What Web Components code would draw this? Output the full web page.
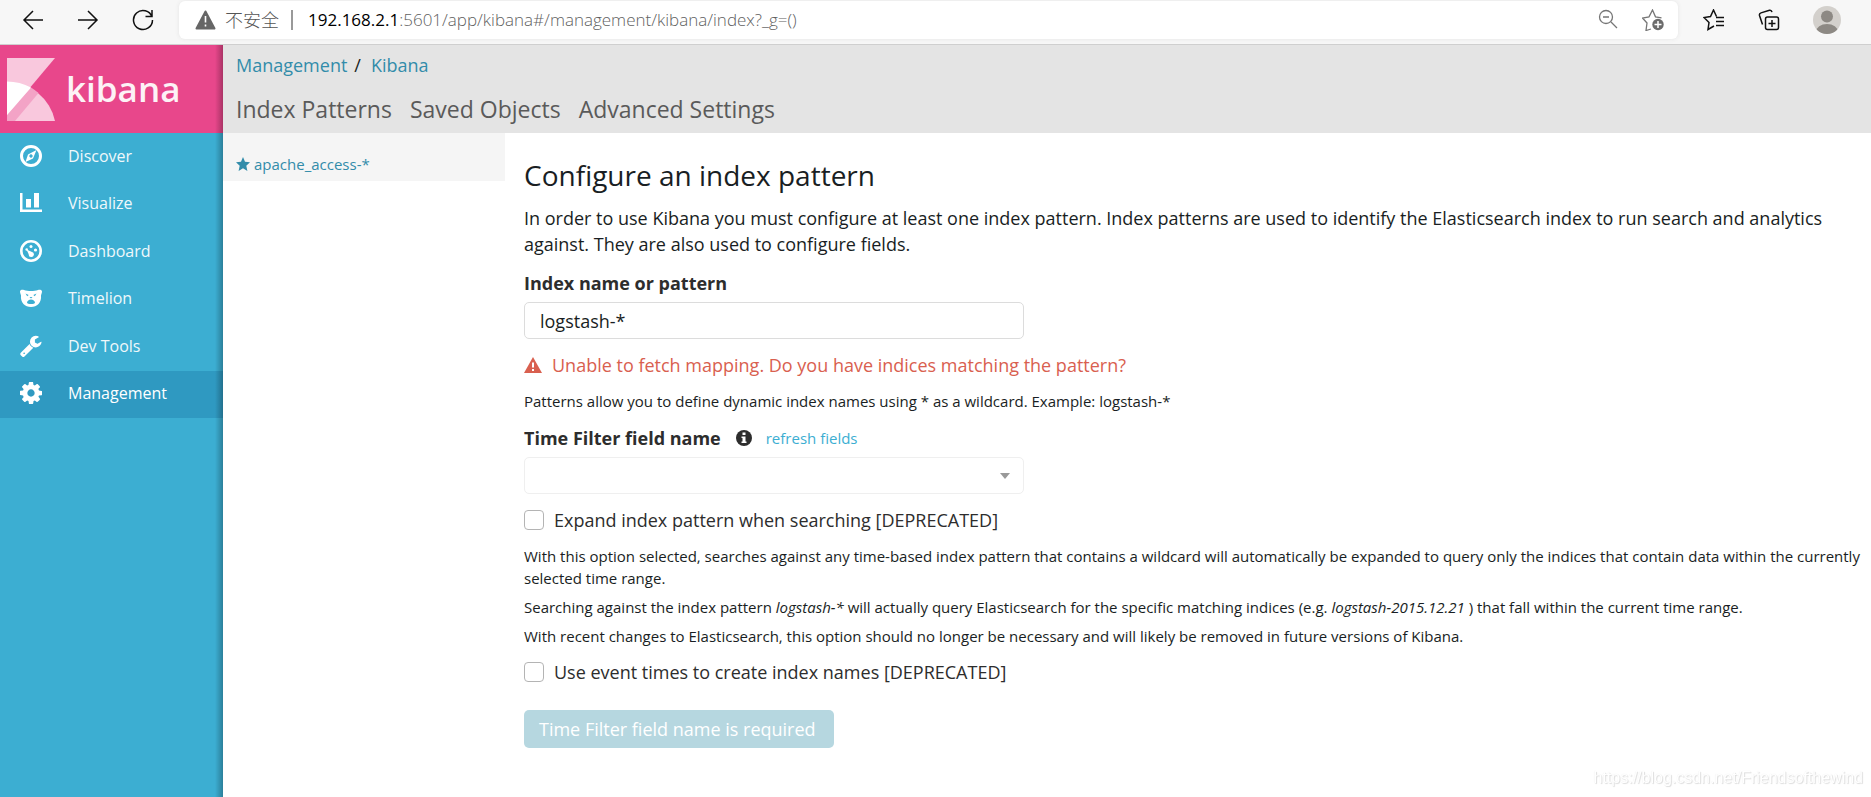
<!DOCTYPE html>
<html lang="en">
<head>
<meta charset="utf-8">
<title>Kibana</title>
<style>
  html, body { margin: 0; min-height: 100vh; }
  body {
    display: flex; flex-direction: column; background: #fff; color: #191e23;
    font: 18px/26px "Open Sans", "Noto Sans CJK SC", sans-serif;
    --accent: #328caa; --link: #3caed2; --ink: #2d2d2d;
  }
  kibana-app { flex: 1; }
</style>
</head>
<body>
<browser-bar></browser-bar>
<kibana-app>
  <side-nav slot="nav">
    <nav-item icon="compass">Discover</nav-item>
    <nav-item icon="chart">Visualize</nav-item>
    <nav-item icon="gauge">Dashboard</nav-item>
    <nav-item icon="bear">Timelion</nav-item>
    <nav-item icon="wrench">Dev Tools</nav-item>
    <nav-item icon="cog" active>Management</nav-item>
  </side-nav>
  <management-header slot="header"></management-header>
  <pattern-list slot="list">apache_access-*</pattern-list>
  <pattern-form slot="main"></pattern-form>
</kibana-app>
<water-mark>https://blog.csdn.net/Friendsofthewind</water-mark>

<script>
const define = (name, html, setup) => {
  const tpl = document.createElement('template');
  tpl.innerHTML = html;
  customElements.define(name, class extends HTMLElement {
    constructor() {
      super();
      this.attachShadow({ mode: 'open' }).append(tpl.content.cloneNode(true));
    }
    connectedCallback() { if (setup) setup(this, this.shadowRoot); }
  });
};

const ICONS = {
  compass: '<svg viewBox="0 0 22 22"><circle cx="11" cy="11" r="9.500" fill="none" stroke="#fff" stroke-width="3"/><path fill="#fff" fill-rule="evenodd" d="M16.500 5 13 13.500 5.500 17 8 9.500ZM11 9.300a1.700 1.700 0 1 0 .01 0Z"/></svg>',
  chart: '<svg viewBox="0 0 22 22"><path fill="#fff" d="M0 1h2.500v16.500H22V20H0zM6 7h5v8.500H6zM14 1h5v14.500h-5z"/></svg>',
  gauge: '<svg viewBox="0 0 22 22"><circle cx="11" cy="11" r="9.700" fill="none" stroke="#fff" stroke-width="2.600"/><g fill="#fff"><circle cx="11" cy="6.500" r="1.500"/><circle cx="15.500" cy="10" r="1.600"/><circle cx="6.700" cy="9.500" r="1.300"/><path d="M6.500 9.500 12 12a2.600 2.600 0 1 1-3.300 2.300Z"/></g></svg>',
  bear: '<svg viewBox="0 0 22 22"><path fill="#fff" fill-rule="evenodd" d="M0 4.500C0 3 2 2.500 4 3c4 1.300 10 1.300 14 0 2-.5 4 0 4 1.500 0 1.500-.7 2.500-1 4 .8 7-4 11.500-10 11.500S.2 15.500 1 8.500c-.3-1.500-1-2.500-1-4ZM5.500 6.500l1.700 2.700 1.500-1.200ZM16.500 6.500l-1.700 2.700L13.300 8ZM9.500 10l1.500 1.500 1.500-1.500ZM11 12.500c-2 0-4 1.800-4 3 0 1 2 1.500 4 1.500s4-.5 4-1.500c0-1.200-2-3-4-3Z"/></svg>',
  wrench: '<svg viewBox="64 64 1700 1700"><path fill="#fff" d="M448 1472q0-26-19-45t-45-19-45 19-19 45 19 45 45 19 45-19 19-45zm644-420l-682 682q-37 37-90 37-52 0-91-37l-106-108q-38-36-38-90 0-53 38-91l681-681q39 98 114.500 173.500t173.500 114.500zm634-435q0 39-23 106-47 134-164.500 217.500t-258.500 83.500q-185 0-316.500-131.500t-131.500-316.500 131.500-316.500 316.500-131.500q58 0 121.500 16.500t107.500 46.500q16 11 16 28t-16 28l-293 169v224l193 107q5-3 79-48.500t135.500-81 70.500-35.500q15 0 23.500 10t8.500 25z"/></svg>',
  cog: '<svg viewBox="128 128 1536 1536"><path fill="#fff" d="M1152 896q0-106-75-181t-181-75-181 75-75 181 75 181 181 75 181-75 75-181zm512-109v222q0 12-8 23t-20 13l-185 28q-19 54-39 91 35 50 107 138 10 12 10 25t-9 23q-27 37-99 108t-94 71q-12 0-26-9l-138-108q-44 23-91 38-16 136-29 186-7 28-36 28h-222q-14 0-24.500-8.500t-11.500-21.500l-28-184q-49-16-90-37l-141 107q-10 9-25 9-14 0-25-11-126-114-165-168-7-10-7-23 0-12 8-23 15-21 51-66.500t54-70.500q-27-50-41-99l-183-27q-13-2-21-12.500t-8-23.500v-222q0-12 8-23t19-13l186-28q14-46 39-92-40-57-107-138-10-12-10-24 0-10 9-23 26-36 98.500-107.500t94.500-71.500q13 0 26 10l138 107q44-23 91-38 16-136 29-186 7-28 36-28h222q14 0 24.500 8.500t11.500 21.500l28 184q49 16 90 37l142-107q9-9 24-9 13 0 25 10 129 119 165 170 7 8 7 22 0 12-8 23-15 21-51 66.500t-54 70.500q26 50 41 98l183 28q13 2 21 12.500t8 23.500z"/></svg>'
};

define('browser-bar', `
  <style>
    :host { display: flex; align-items: center; height: 44px; background: #f7f7f7; border-bottom: 1px solid #cfcfcf; padding: 0 30px 0 22px; gap: 33px; font-size: 17px; line-height: 24px; box-sizing: content-box; }
    button { all: unset; display: flex; flex: none; }
    svg { display: block; }
    .arrows { display: flex; gap: 33px; padding-bottom: 4px; }
    .field { flex: 1; min-width: 0; box-sizing: border-box; display: flex; align-items: center; height: 38px; margin: 0 0 4px -8px; padding: 0 13px 0 16px; border-radius: 6px; background: #fff; box-shadow: 0 0 4px #e4e4e4; color: #6b6b6b; }
    .warn { margin-right: 9px; }
    .cjk { font-size: 18px; font-weight: 300; color: #555; }
    .sep { width: 2px; height: 20px; background: #999; margin: 0 15px 0 12px; }
    .url { flex: 1; min-width: 0; white-space: nowrap; overflow: hidden; color: #5f5f5f; font-weight: 300; }
    .url b { color: #000; font-weight: 400; }
    .inside { display: flex; gap: 24px; }
    .tools { display: flex; align-items: center; gap: 33px; margin-left: -8px; padding-bottom: 4px; }
  </style>
  <div class="arrows">
    <button aria-label="Back"><svg width="22" height="22" fill="none" stroke="#111" stroke-width="1.500"><path d="M21 11H2M11 2 2 11l9 9"/></svg></button>
    <button aria-label="Forward"><svg width="22" height="22" fill="none" stroke="#111" stroke-width="1.500"><path d="M1 11h19M11 2l9 9-9 9"/></svg></button>
    <button aria-label="Reload"><svg width="22" height="22" fill="none" stroke="#111" stroke-width="1.500"><path d="M20 8a9.500 9.500 0 1 0 .5 3M20 1v6.500h-6.500"/></svg></button>
  </div>
  <div class="field">
    <svg class="warn" width="21" height="20" viewBox="0 0 21 20"><path d="M10.500 1.500 19.500 18.500h-18Z" fill="#666" stroke="#666" stroke-width="2" stroke-linejoin="round"/><path d="M10.500 6v6.500M10.500 14.500v2" stroke="#fff" stroke-width="1.600"/></svg>
    <span class="cjk">不安全</span><span class="sep"></span>
    <span class="url"><b>192.168.2.1</b>:5601/app/kibana#/management/kibana/index?_g=()</span>
    <div class="inside">
      <button aria-label="Zoom out"><svg width="20" height="20" fill="none" stroke="#767676" stroke-width="1.300"><circle cx="8" cy="8" r="6.500"/><path d="M5 8h6M13 13l6 6"/></svg></button>
      <button aria-label="Add favourite"><svg width="23" height="22" fill="none" stroke="#767676" stroke-width="1.300"><path d="M9 20l-5 1.500 1-7.500-4.500-5L7 7.800 10.500 1l3 6.800 6 1"/><circle cx="16" cy="15.500" r="5.700" fill="#6b6b6b" stroke="none"/><path stroke="#fff" stroke-width="1.500" d="M16 12v7M12.500 15.500h7"/></svg></button>
    </div>
  </div>
  <div class="tools">
    <button aria-label="Favourites"><svg width="22" height="22" fill="none" stroke="#111" stroke-width="1.500"><path d="M11 17l-6 3.500 1-7L1 8.500l6.500-1L10.500 1l3 6.500M13 8.500h8M13 12.500h8M13 16.500h8"/></svg></button>
    <button aria-label="Collections"><svg width="22" height="22" fill="none" stroke="#111" stroke-width="1.500"><rect x="7.500" y="8" width="13" height="12.500" rx="2"/><path d="M14 11v7M10.500 14.500h7M4.500 15.500 1.500 6.500q-.5-2 1.500-2.600L11.500 1.200q2-.4 2.500 2"/></svg></button>
    <button aria-label="Profile"><svg width="28" height="28" viewBox="0 0 28 28"><defs><clipPath id="c"><circle cx="14" cy="14" r="14"/></clipPath></defs><g clip-path="url(#c)"><path fill="#d3d0cc" d="M0 0h28v28H0z"/><g fill="#8d8984"><circle cx="14" cy="10.500" r="6"/><ellipse cx="14" cy="26" rx="11" ry="8"/></g></g></svg></button>
  </div>`);

define('kibana-app', `
  <style>
    :host { display: grid; grid-template-columns: 223px minmax(0, 1fr); }
    .page { display: grid; grid-template-columns: 282px minmax(0, 1fr); grid-template-rows: auto 1fr; }
    slot[name=header]::slotted(*) { grid-column: 1 / -1; }
  </style>
  <slot name="nav"></slot>
  <div class="page"><slot name="header"></slot><slot name="list"></slot><slot name="main"></slot></div>`);

define('side-nav', `
  <style>
    :host { display: block; position: relative; background: #3caed2; }
    :host::after { content: ""; position: absolute; inset: 0 0 0 auto; width: 8px; background: linear-gradient(to right, #0000, #0004); pointer-events: none; }
    .brand { display: flex; align-items: center; gap: 11px; height: 88px; padding-left: 7px; background: #e8478b; color: #fff; text-decoration: none; }
    .brand span { font-size: 35px; line-height: 40px; font-weight: 600; opacity: .93; }
    nav { display: grid; grid-auto-rows: 1fr; height: 285px; }
  </style>
  <a class="brand" href="#">
    <svg width="48" height="63" viewBox="0 0 48 63" aria-hidden="true"><path fill="#f9c8dd" d="M0 0h48L0 57Z"/><path fill="#f9c8dd" d="M0 24a49 49 0 0 1 48 39H0Z"/><path fill="#f3a3c6" d="M24 29.500Q28 32 31.500 35L8 63H0v-6Z"/><path fill="#fff" d="M0 23.500q13 0 24 6L0 57Z"/></svg>
    <span>kibana</span>
  </a>
  <nav><slot></slot></nav>`);

define('nav-item', `
  <style>
    :host { display: block; }
    a { box-sizing: border-box; display: flex; align-items: center; gap: 26px; height: 100%; padding: 0 0 2px 20px; color: #eff8fb; font-size: 16px; line-height: 24px; text-decoration: none; }
    :host([active]) a { background: #2f99c1; color: #fff; }
    .icon, .icon svg { display: block; width: 22px; height: 22px; }
  </style>
  <a href="#"><span class="icon"></span><slot></slot></a>`,
  (host, root) => { root.querySelector('.icon').innerHTML = ICONS[host.getAttribute('icon')]; });

define('management-header', `
  <style>
    :host { display: block; background: #e4e4e4; padding: 7px 13px 8px; }
    .crumbs { display: flex; gap: 7px; line-height: 26px; }
    .crumbs a { color: var(--accent); text-decoration: none; }
    .crumbs a + span { margin-right: 3px; }
    nav { display: flex; gap: 18px; margin-top: 16px; font-size: 23px; line-height: 31px; }
    nav a { color: #5a5a5a; text-decoration: none; }
  </style>
  <div class="crumbs"><a href="#">Management</a><span>/</span><a href="#">Kibana</a></div>
  <nav><a href="#">Index Patterns</a><a href="#">Saved Objects</a><a href="#">Advanced Settings</a></nav>`);

define('pattern-list', `
  <style>
    :host { display: block; }
    a { display: flex; align-items: center; gap: 4px; height: 34px; padding: 14px 13px 0; background: #f5f5f5; color: var(--accent); font-size: 15px; line-height: 22px; text-decoration: none; }
  </style>
  <a href="#"><svg width="14" height="14" viewBox="0 0 14 14" fill="currentColor" aria-hidden="true"><path d="M7 0 9 4.800 14 5.300 10.300 8.700 11.400 14 7 11.300 2.600 14 3.700 8.700 0 5.300 5 4.800Z"/></svg><slot></slot></a>`);

define('check-field', `
  <style>
    :host { display: block; }
    label { display: flex; align-items: center; gap: 10px; color: var(--ink); }
    input { appearance: none; flex: none; width: 20px; height: 20px; margin: 0; border: 1px solid #b4b4b4; border-radius: 4px; background: #fff; }
  </style>
  <label><input type="checkbox"><slot></slot></label>`);

define('help-text', `
  <style>:host { display: block; font-size: 15px; line-height: 22px; }</style><slot></slot>`);

define('pattern-form', `
  <style>
    :host { display: block; padding: 23px 8px 24px 19px; }
    h1 { margin: 0 0 11px; font-size: 28px; line-height: 38px; font-weight: 400; }
    p { margin: 0 0 13px; }
    form { display: flex; flex-direction: column; align-items: stretch; }
    .label { display: flex; align-items: center; margin-bottom: 6px; color: var(--ink); font-weight: 700; }
    .label svg { margin: 0 14px 0 15px; }
    .label a { color: var(--link); font-size: 15px; font-weight: 400; text-decoration: none; }
    input, select { appearance: none; box-sizing: border-box; width: 500px; max-width: 100%; height: 37px; margin: 0 0 13px; padding: 0 15px; border: 1px solid #dcdcdc; border-radius: 5px; background: #fff; color: inherit; font: inherit; }
    .select { position: relative; width: 500px; max-width: 100%; height: 37px; margin-bottom: 13px; }
    .select select { width: 100%; margin: 0; border-color: #efefef; opacity: 1; }
    .select svg { position: absolute; right: 14px; top: 16px; }
    .error { display: flex; align-items: center; gap: 10px; margin-bottom: 12px; color: #d9604f; }
    help-text { margin-bottom: 13px; }
    .notes { display: flex; flex-direction: column; gap: 7px; margin: 12px 0; }
    .notes help-text { margin: 0; }
    button { align-self: flex-start; min-width: 310px; height: 38px; margin-top: 25px; padding: 0 15px; border: 0; border-radius: 5px; background: #b6d7e0; color: #fff; font: inherit; text-align: left; }
  </style>
  <h1>Configure an index pattern</h1>
  <p>In order to use Kibana you must configure at least one index pattern. Index patterns are used to identify the Elasticsearch index to run search and analytics against. They are also used to configure fields.</p>
  <form>
    <label class="label" for="name">Index name or pattern</label>
    <input id="name" type="text" value="logstash-*">
    <div class="error"><svg width="18" height="16" viewBox="0 0 18 16" aria-hidden="true"><path d="M9 0 18 16H0Z" fill="#d9604f"/><path d="M9 5.500V10.500M9 12v2" stroke="#fff" stroke-width="2"/></svg><span>Unable to fetch mapping. Do you have indices matching the pattern?</span></div>
    <help-text>Patterns allow you to define dynamic index names using * as a wildcard. Example: logstash-*</help-text>
    <div class="label"><label for="time">Time Filter field name</label><svg width="16" height="16" viewBox="0 0 16 16" aria-hidden="true"><circle cx="8" cy="8" r="8" fill="#2d2d2d"/><path fill="#fff" d="M6.500 2.500h3V5h-3zM5.500 6.500h4v5h1V13h-5v-1.500h1V8h-1z"/></svg><a href="#">refresh fields</a></div>
    <div class="select"><select id="time" disabled></select><svg width="10" height="6" aria-hidden="true"><path d="M0 0h10L5 6Z" fill="#999"/></svg></div>
    <check-field>Expand index pattern when searching [DEPRECATED]</check-field>
    <div class="notes">
      <help-text>With this option selected, searches against any time-based index pattern that contains a wildcard will automatically be expanded to query only the indices that contain data within the currently selected time range.</help-text>
      <help-text>Searching against the index pattern <i>logstash-*</i> will actually query Elasticsearch for the specific matching indices (e.g. <i>logstash-2015.12.21</i> ) that fall within the current time range.</help-text>
      <help-text>With recent changes to Elasticsearch, this option should no longer be necessary and will likely be removed in future versions of Kibana.</help-text>
    </div>
    <check-field>Use event times to create index names [DEPRECATED]</check-field>
    <button type="submit" disabled>Time Filter field name is required</button>
  </form>`);

define('water-mark', `
  <style>:host { position: fixed; right: 8px; bottom: 8px; color: #fff; font: 16px/22px "Liberation Sans", sans-serif; text-shadow: 1px 1px 1px #dcdcdc, 0 0 1px #e8e8e8; pointer-events: none; }</style><slot></slot>`);
</script>
</body>
</html>
